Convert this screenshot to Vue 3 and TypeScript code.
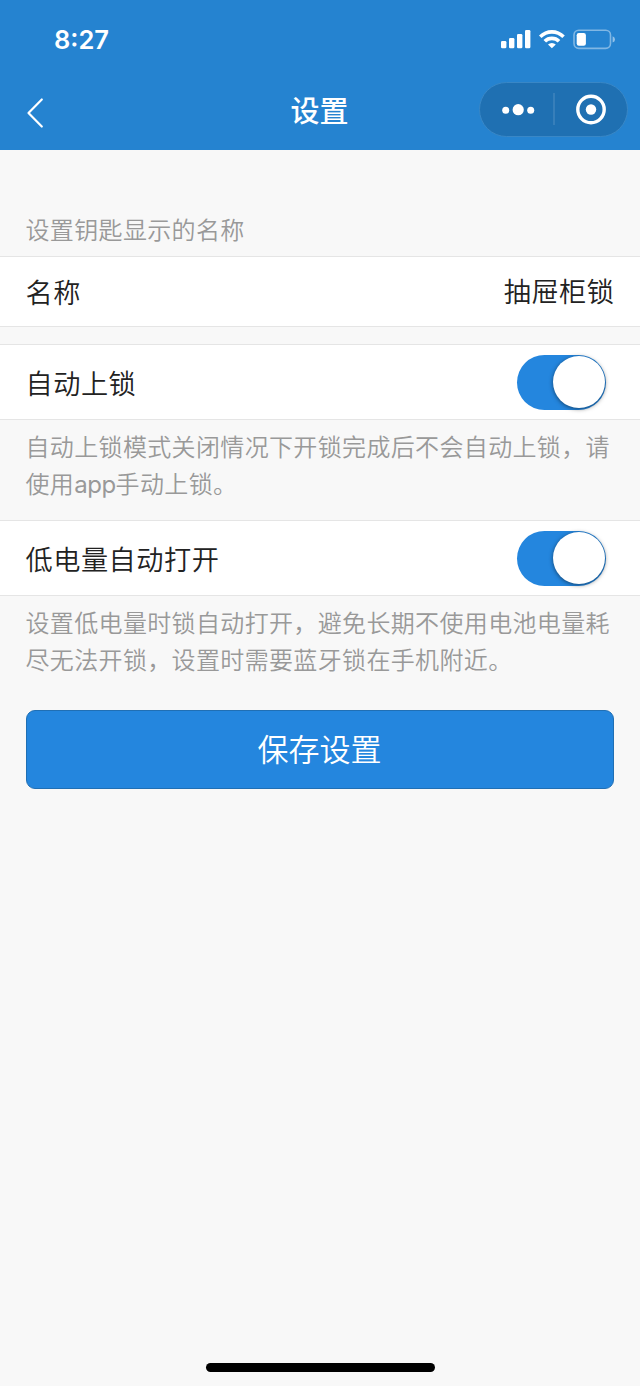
<script setup lang="ts">
import { ref } from 'vue'

const deviceName = ref<string>('抽屉柜锁')
const autoLock = ref<boolean>(true)
const lowPowerOpen = ref<boolean>(true)
</script>

<template>
  <div class="page">
    <header class="header">
      <div class="status">
        <span class="time">8:27</span>
        <svg class="indicators" width="116" height="24" viewBox="0 0 116 24" fill="#fff">
          <rect x="1" y="13" width="5.4" height="7.2" rx="1.3" />
          <rect x="9" y="10" width="5.4" height="10.2" rx="1.3" />
          <rect x="17" y="6" width="5.4" height="14.2" rx="1.3" />
          <rect x="25" y="2" width="5.4" height="18.2" rx="1.3" />
          <path d="M39 7.4A18.3 18.3 0 0 1 64.8 7.4L62.3 10A14.8 14.8 0 0 0 41.5 10Z" />
          <path d="M43.5 12A12 12 0 0 1 60.3 12L57.7 14.6A8.3 8.3 0 0 0 46.1 14.6Z" />
          <path d="M48 16.5A5.7 5.7 0 0 1 55.8 16.5L51.9 20.3Z" />
          <rect x="74" y="2.2" width="36.5" height="18.2" rx="4.8" fill="none" stroke="#fff" stroke-opacity=".42" stroke-width="1.6" />
          <rect x="76.7" y="5" width="9.2" height="12.7" rx="2.2" />
          <path d="M112.6 8.2Q115 9 115 11.4T112.6 14.6Z" fill-opacity=".5" />
        </svg>
      </div>
      <div class="nav">
        <svg class="back" width="20" height="32" viewBox="0 0 20 32" fill="none" stroke="#fff" stroke-width="2.2" stroke-linecap="round" stroke-linejoin="round">
          <path d="M16.8 2.5L3.5 16L16.8 29.5" />
        </svg>
        <h1 class="title">设置</h1>
        <div class="capsule">
          <svg width="148" height="54" viewBox="0 0 148 54" fill="#fff">
            <circle cx="25.7" cy="27.2" r="3.5" />
            <circle cx="38.2" cy="26.7" r="5.6" />
            <circle cx="50.7" cy="27.2" r="3.5" />
            <rect x="73.5" y="10" width="1" height="32" fill-opacity=".22" />
            <circle cx="111" cy="26.5" r="13.2" fill="none" stroke="#fff" stroke-width="3.4" />
            <circle cx="111" cy="26.5" r="5.2" />
          </svg>
        </div>
      </div>
    </header>

    <main class="content">
      <p class="caption">设置钥匙显示的名称</p>
      <div class="cell name-cell">
        <span class="label">名称</span>
        <span class="label value">{{ deviceName }}</span>
      </div>

      <div class="cell switch-cell auto-cell">
        <span class="label">自动上锁</span>
        <button class="switch" :class="{ on: autoLock }" role="switch" :aria-checked="autoLock" @click="autoLock = !autoLock">
          <i class="knob"></i>
        </button>
      </div>
      <p class="hint">自动上锁模式关闭情况下开锁完成后不会自动上锁，请<br />使用<span class="latin">app</span>手动上锁。</p>

      <div class="cell switch-cell">
        <span class="label">低电量自动打开</span>
        <button class="switch" :class="{ on: lowPowerOpen }" role="switch" :aria-checked="lowPowerOpen" @click="lowPowerOpen = !lowPowerOpen">
          <i class="knob"></i>
        </button>
      </div>
      <p class="hint">设置低电量时锁自动打开，避免长期不使用电池电量耗<br />尽无法开锁，设置时需要蓝牙锁在手机附近。</p>

      <button class="save">保存设置</button>
    </main>

    <div class="home-bar"></div>
  </div>
</template>

<style>
body {
  margin: 0;
  background: #f8f8f8;
}
</style>

<style scoped>
.page {
  box-sizing: border-box;
  width: 640px;
  height: 1386px;
  display: flex;
  flex-direction: column;
  background: #f8f8f8;
  font-family: "Noto Sans CJK SC", sans-serif;
  font-weight: 350;
  overflow: hidden;
}
.header {
  height: 150px;
  flex: none;
  background: #2583d0;
  color: #fff;
}
.status {
  box-sizing: border-box;
  height: 78px;
  display: flex;
  align-items: center;
  justify-content: space-between;
  padding: 2px 24px 0 54px;
}
.time {
  font: 600 25.5px/30px Inter, sans-serif;
}
.nav {
  height: 72px;
  display: grid;
  grid-template-columns: 1fr auto 1fr;
  align-items: center;
  padding: 0 12px 0 25px;
}
.back {
  margin-top: -3px;
}
.title {
  margin: -11px 0 0 -14px;
  font-size: 29px;
  line-height: 40px;
  font-weight: 500;
}
.capsule {
  box-sizing: border-box;
  justify-self: end;
  width: 149px;
  height: 55px;
  margin-top: -9px;
  border: 1px solid #3987c6;
  border-radius: 28px;
  background: #1f70b2;
}
.capsule svg {
  display: block;
  margin: -0.5px;
}
.content {
  flex: 1;
  display: flex;
  flex-direction: column;
}
.caption {
  margin: 60px 26px 9px 25.5px;
  font-size: 24px;
  line-height: 37px;
  letter-spacing: 0.35px;
  color: #999;
}
.cell {
  box-sizing: border-box;
  display: flex;
  align-items: center;
  justify-content: space-between;
  padding: 0 25.5px;
  border-top: 1px solid #e5e5e5;
  border-bottom: 1px solid #e5e5e5;
  background: #fff;
}
.name-cell {
  height: 71px;
  padding-bottom: 2px;
}
.switch-cell {
  height: 76px;
  padding-right: 34px;
}
.auto-cell {
  margin-top: 17px;
}
.label {
  font-size: 27.2px;
  line-height: 40px;
  letter-spacing: 0.5px;
  color: #222;
}
.value {
  padding-bottom: 1px;
}
.switch {
  box-sizing: border-box;
  width: 89px;
  height: 55px;
  display: flex;
  padding: 1.5px;
  border: 0;
  border-radius: 28px;
  background: #dfdfdf;
}
.switch.on {
  justify-content: flex-end;
  background: #2486de;
}
.knob {
  width: 52px;
  height: 52px;
  border-radius: 50%;
  background: #fff;
  box-shadow: 0 1px 4px rgba(0, 0, 0, 0.5);
}
.hint {
  margin: 7px 0 19px 25.5px;
  font-size: 24px;
  line-height: 37px;
  letter-spacing: 0.35px;
  color: #999;
  white-space: nowrap;
}
.latin {
  font-family: Inter, sans-serif;
  font-weight: 400;
  letter-spacing: -0.5px;
  line-height: 1;
}
.save {
  box-sizing: border-box;
  height: 79px;
  margin: 14px 26px 0;
  padding: 0 1px 0 0;
  border: 1px solid #206fb4;
  border-radius: 9px;
  background: #2486de;
  color: #fff;
  font-family: inherit;
  font-size: 31px;
  font-weight: 350;
  line-height: 74px;
  display: flex;
  align-items: flex-start;
  justify-content: center;
}
.home-bar {
  align-self: center;
  width: 229px;
  height: 9px;
  flex: none;
  margin-bottom: 14px;
  border-radius: 5px;
  background: #000;
}
</style>
